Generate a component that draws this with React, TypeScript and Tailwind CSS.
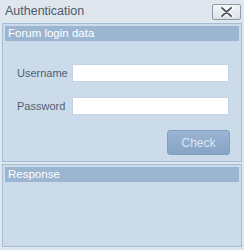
import { type ReactNode } from "react";

/**
 * Small "Authentication" dialog — forum login panel on top, response panel below.
 */
export default function App() {
  return (
    <div className="flex h-[250px] w-[244px] flex-col bg-[#dfe6ee] font-['Liberation_Sans',Arial,sans-serif]">
      <TitleBar />
      <div className="flex flex-1 flex-col gap-[2px] px-[2px] pb-[3px]">
        <Panel title="Forum login data" className="h-[139px]">
          <div className="flex flex-col gap-[15px] pl-[12px] pr-[10px] pt-[23px]">
            <Field label="Username" />
            <Field label="Password" />
          </div>
          <div className="flex justify-end pr-[9px] pt-[15px]">
            <button className="h-[25px] w-[63px] rounded-[3px] border border-[#7f9fc2] bg-gradient-to-b from-[#9bb5d3] to-[#86a4c6] text-[12px] text-[#dce6f1]">
              Check
            </button>
          </div>
        </Panel>
        <Panel title="Response" className="flex-1" />
      </div>
    </div>
  );
}

function TitleBar() {
  return (
    <div className="flex h-[23px] items-center justify-between pl-[5px] pr-[3px]">
      <span className="text-[12.5px] text-[#4e5967]">Authentication</span>
      <button className="flex h-[16px] w-[29px] items-center justify-center rounded-[2px] border border-[#8d99a6] bg-gradient-to-b from-[#f4f6f8] to-[#d9e0e7]">
        <svg width={13} height={10} viewBox="0 0 13 10" aria-hidden>
          <path d="M2 1 L11 9 M11 1 L2 9" stroke="#ffffff" strokeWidth={4} strokeLinecap="round" />
          <path d="M2 1 L11 9 M11 1 L2 9" stroke="#555c66" strokeWidth={2} strokeLinecap="round" />
        </svg>
      </button>
    </div>
  );
}

function Panel({
  title,
  className,
  children,
}: {
  title: string;
  className?: string;
  children?: ReactNode;
}) {
  return (
    <div className={`flex flex-col border border-[#a4bcd6] bg-[#ccdbe9] p-[2px] ${className ?? ""}`}>
      <div className="flex h-[15px] items-center bg-[#9cb6d1] pl-[3px] text-[11.5px] leading-none text-white">
        {title}
      </div>
      {children}
    </div>
  );
}

function Field({ label }: { label: string }) {
  return (
    <div className="flex items-center">
      <span className="w-[55px] text-[11px] text-[#4f5f74]">{label}</span>
      <div className="h-[18px] flex-1 border border-[#c3d3e3] bg-white" />
    </div>
  );
}
